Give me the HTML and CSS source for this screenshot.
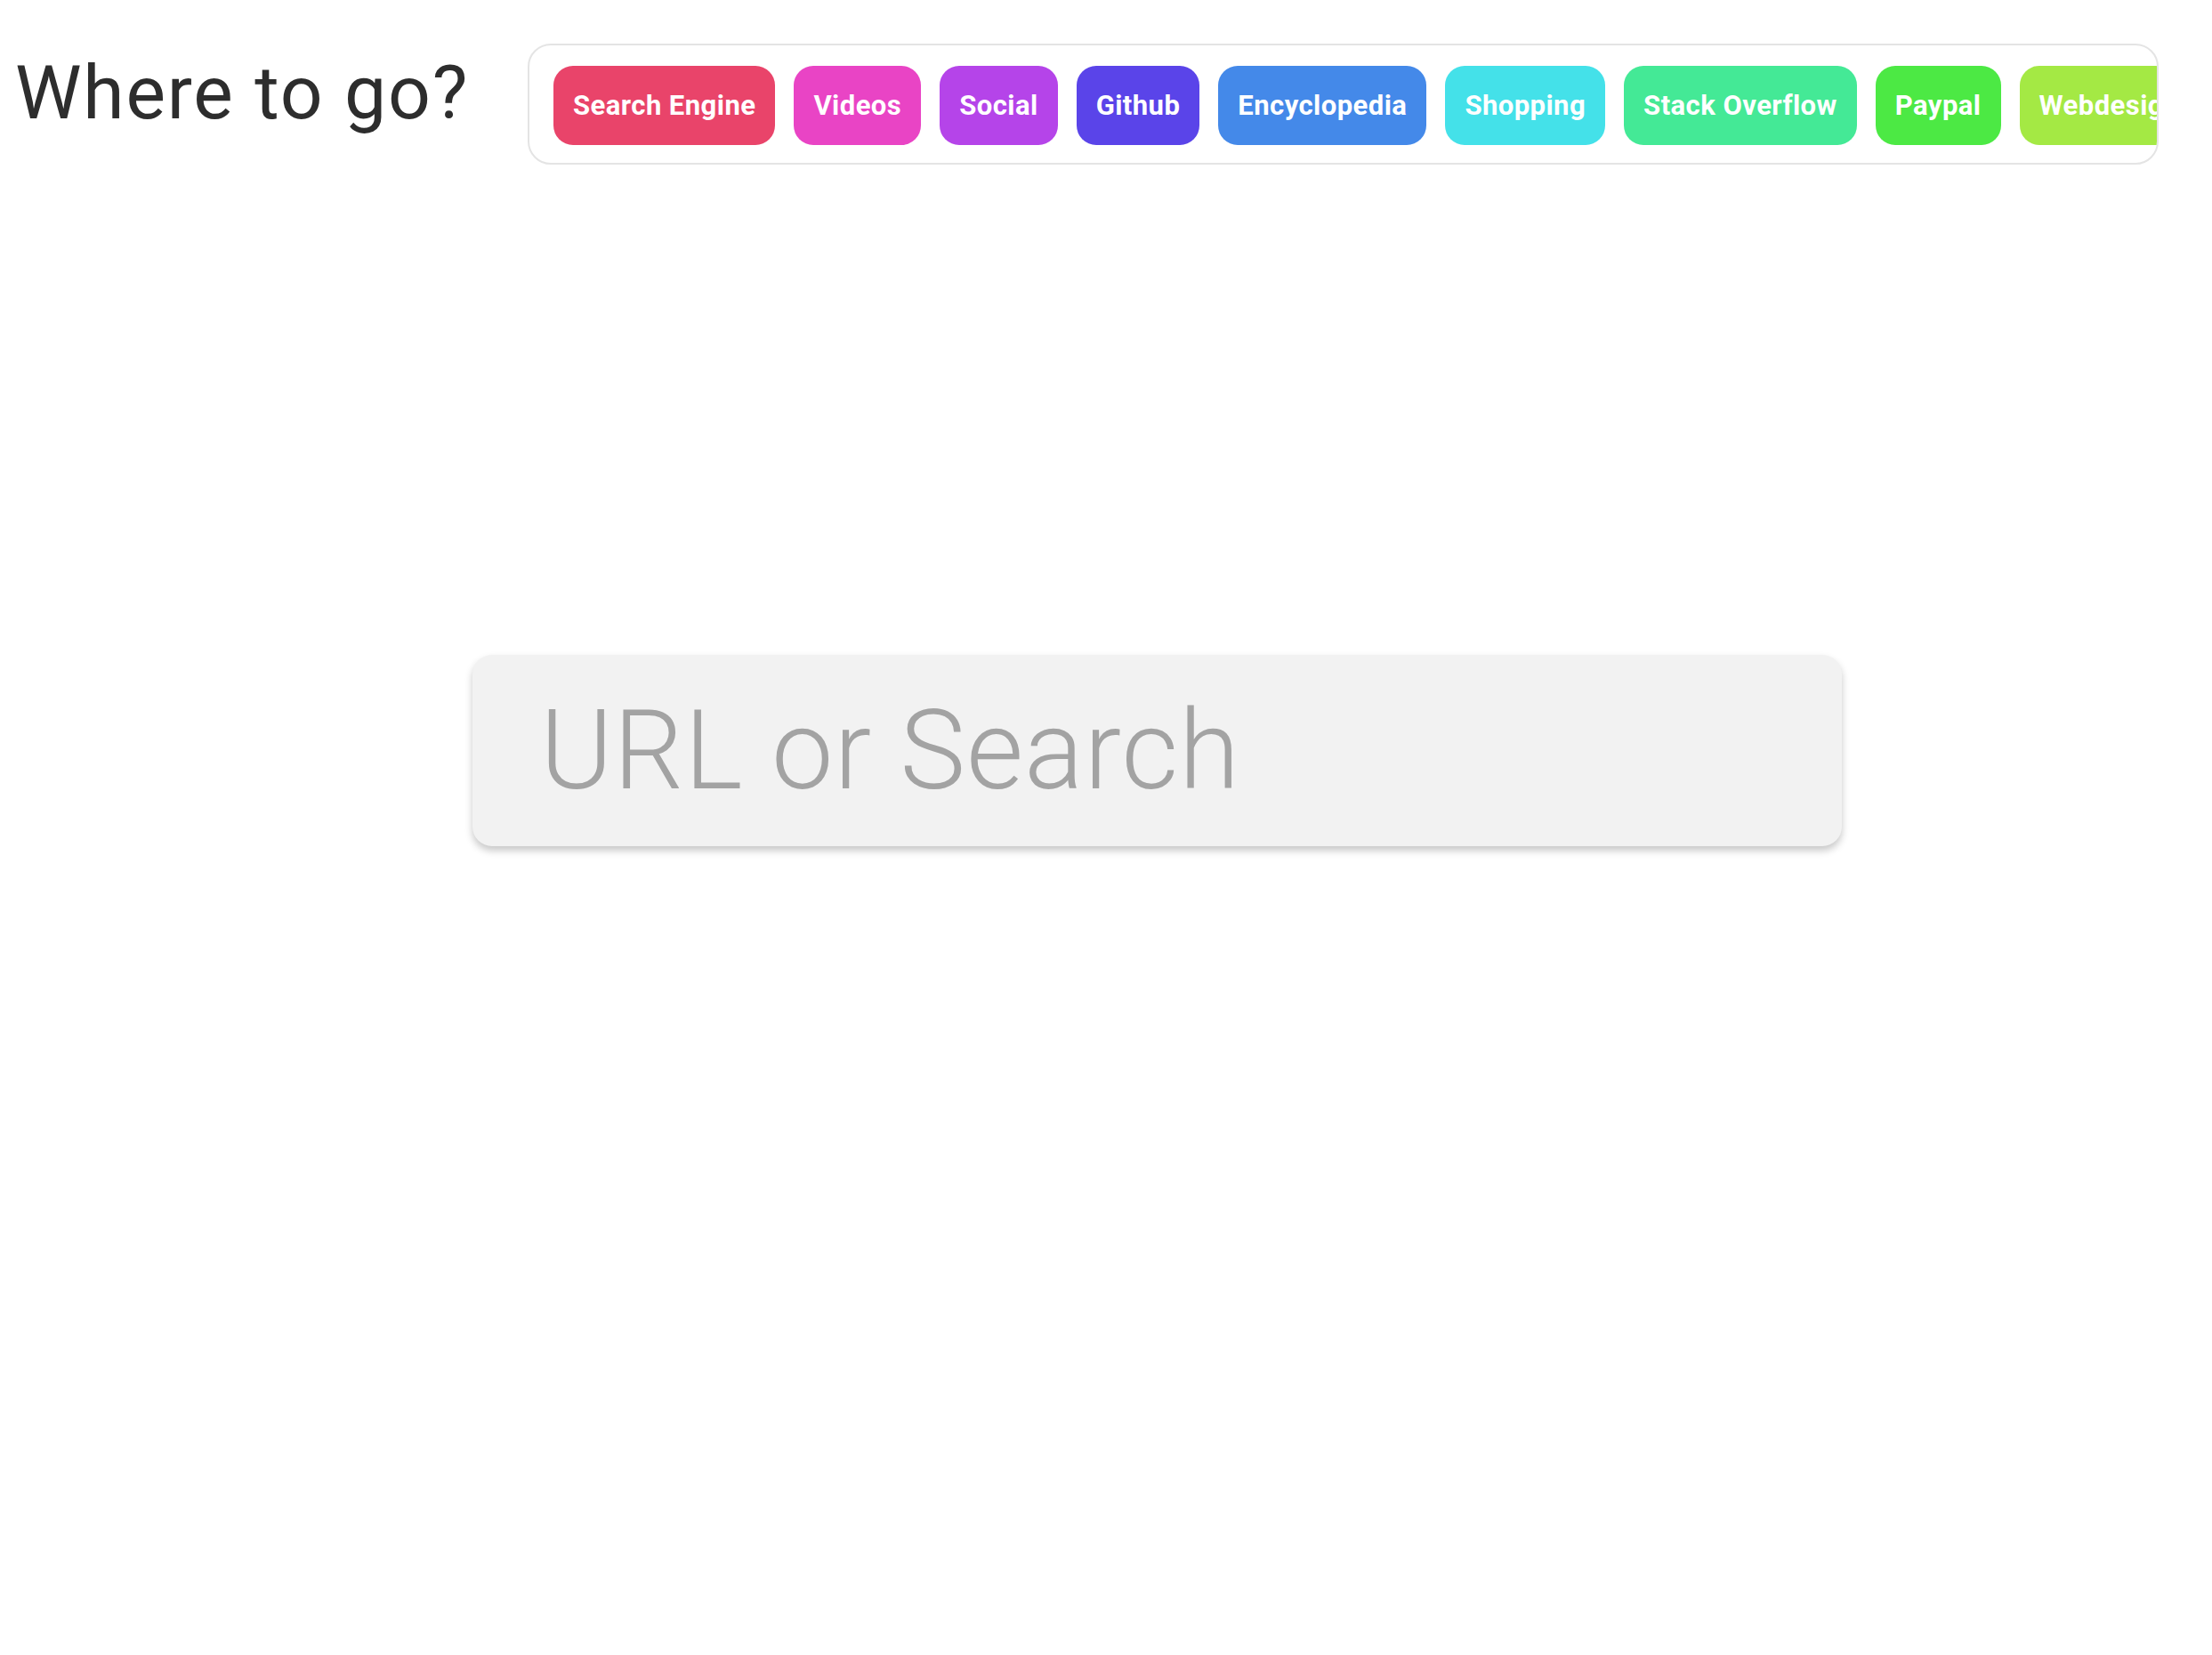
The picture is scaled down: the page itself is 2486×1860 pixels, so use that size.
FILE: index.html
```html
<!DOCTYPE html>
<html lang="en">
<head>
<meta charset="utf-8">
<title>Where to go?</title>
<link rel="stylesheet" href="styles.css">
</head>
<body>
<div class="page">
  <header class="header">
    <h1 class="title">Where to go?</h1>
    <nav class="shortcuts">
      <a class="chip chip-1" href="#">Search Engine</a>
      <a class="chip chip-2" href="#">Videos</a>
      <a class="chip chip-3" href="#">Social</a>
      <a class="chip chip-4" href="#">Github</a>
      <a class="chip chip-5" href="#">Encyclopedia</a>
      <a class="chip chip-6" href="#">Shopping</a>
      <a class="chip chip-7" href="#">Stack Overflow</a>
      <a class="chip chip-8" href="#">Paypal</a>
      <a class="chip chip-9" href="#">Webdesign</a>
    </nav>
  </header>
  <main class="main">
    <input class="search" type="text" placeholder="URL or Search">
  </main>
</div>
</body>
</html>
```

FILE: styles.css
```css
html, body {
  margin: 0;
  padding: 0;
  background: #ffffff;
}

body {
  font-family: Roboto, "Liberation Sans", sans-serif;
  width: 2486px;
  height: 1860px;
  overflow: hidden;
}

.page {
  padding: 49px 0 0 17px;
}

.header {
  display: grid;
  grid-template-columns: 576px 1833px;
  align-items: start;
}

.title {
  margin: 14px 0 0 0;
  font-size: 84px;
  line-height: 1;
  font-weight: 400;
  letter-spacing: 1.8px;
  color: #2d2d2d;
  white-space: nowrap;
}

.shortcuts {
  display: flex;
  flex-wrap: nowrap;
  gap: 21px;
  overflow: hidden;
  box-sizing: border-box;
  width: 1833px;
  padding: 23px 0 20px 27px;
  border: 2px solid #e4e4e4;
  border-radius: 26px;
}

.chip {
  flex-shrink: 0;
  display: flex;
  align-items: center;
  justify-content: center;
  height: 89px;
  padding: 0 22px;
  border-radius: 22px;
  color: #ffffff;
  text-decoration: none;
  font-size: 31px;
  font-weight: 700;
  letter-spacing: 0.45px;
  white-space: nowrap;
}

.chip-1 { background: hsl(346, 79%, 59%); }
.chip-2 { background: hsl(313, 79%, 59%); }
.chip-3 { background: hsl(281, 79%, 59%); }
.chip-4 { background: hsl(248, 79%, 59%); }
.chip-5 { background: hsl(215, 79%, 59%); }
.chip-6 { background: hsl(183, 79%, 59%); }
.chip-7 { background: hsl(150, 79%, 59%); }
.chip-8 { background: hsl(117, 79%, 59%); }
.chip-9 { background: hsl(85, 79%, 59%); }

.main {
  padding: 551px 0 0 514px;
}

.search {
  display: block;
  box-sizing: border-box;
  width: 1539px;
  height: 215px;
  margin: 0;
  padding: 0 76px;
  border: none;
  outline: none;
  border-radius: 22px;
  background: #f2f2f2;
  box-shadow: 0 5px 9px rgba(0, 0, 0, 0.22);
  font-family: Roboto, "Liberation Sans", sans-serif;
  font-size: 124px;
  font-weight: 300;
  letter-spacing: 1px;
  color: #444444;
}

.search::placeholder {
  color: #a3a3a3;
  opacity: 1;
}
```
